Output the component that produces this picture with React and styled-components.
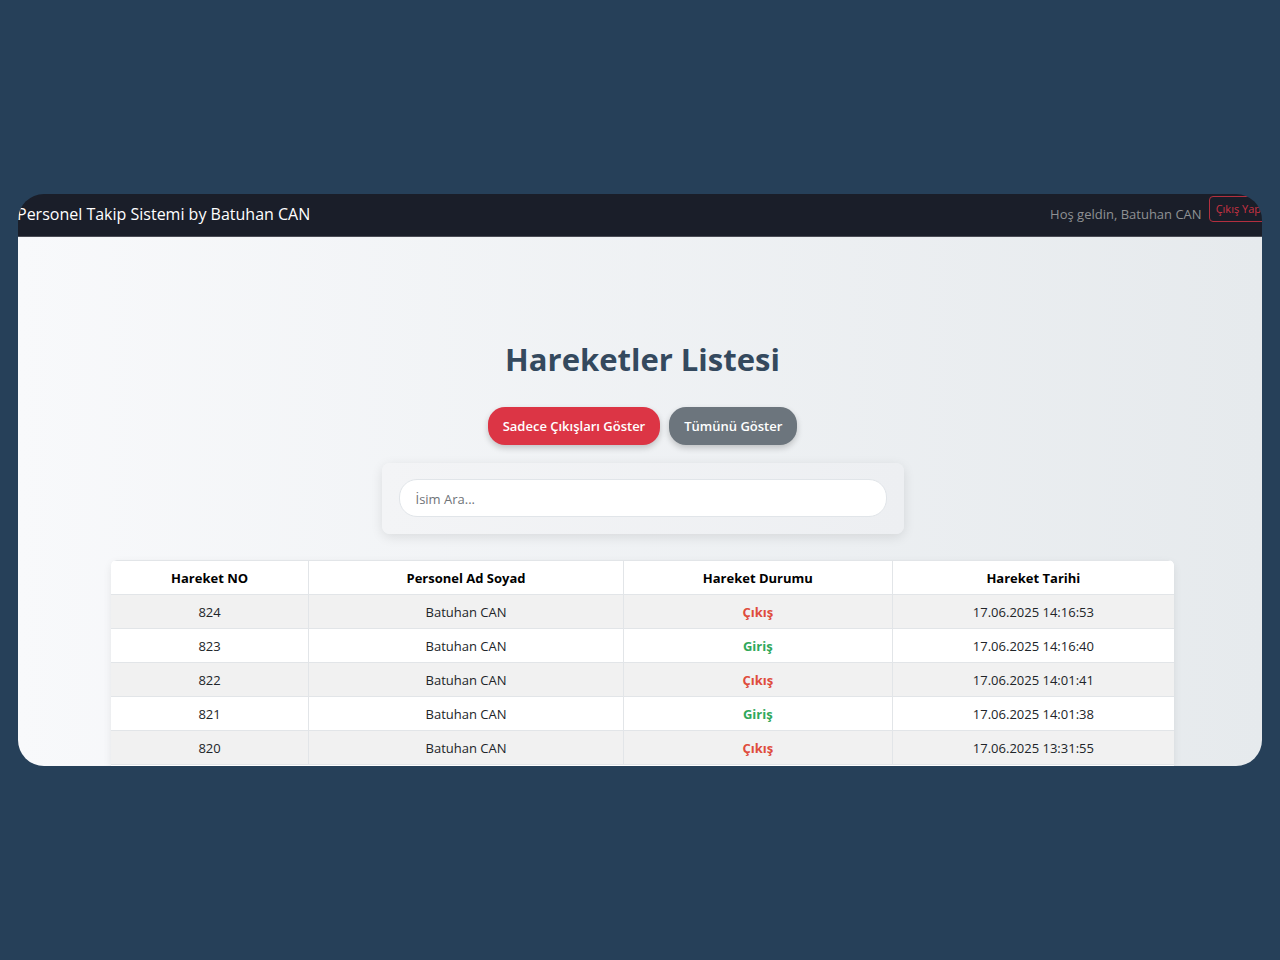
import React, { useState } from "react";
import styled, { createGlobalStyle } from "styled-components";

const GlobalStyle = createGlobalStyle`
  *, *::before, *::after { box-sizing: border-box; }
  body {
    margin: 0;
    background: #264059;
    color: #212529;
    font-family: "Segoe UI", "Open Sans", "Noto Sans", sans-serif;
    font-size: 13px;
    line-height: 20px;
  }
`;

const Page = styled.div`
  min-height: 100vh;
  padding: 18px;
  display: flex;
  align-items: center;
`;

const Frame = styled.div`
  flex: 1;
  min-width: 0;
  overflow: hidden;
  border-radius: 26px;
`;

const Navbar = styled.header`
  display: flex;
  align-items: flex-start;
  height: 43px;
  margin: 0 -6px 0 -1px;
  background: #1a1e29;
  border-bottom: 1px solid #4a4c55;
`;

const Brand = styled.a`
  flex: 1;
  color: #fff;
  font-size: 16px;
  line-height: 41px;
  text-decoration: none;
  white-space: nowrap;
`;

const Welcome = styled.span`
  margin-right: 7px;
  color: #8f9194;
  line-height: 41px;
  white-space: nowrap;
`;

const LogoutButton = styled.button`
  height: 26px;
  margin-top: 2px;
  padding: 0 6px;
  border: 1px solid #b32f3f;
  border-radius: 4px;
  background: transparent;
  color: #c93243;
  font: inherit;
  font-size: 11px;
  white-space: nowrap;
`;

const Main = styled.main`
  display: flex;
  flex-direction: column;
  align-items: center;
  padding: 98px 88px 0 93px;
  background: linear-gradient(90deg, #f8f9fb 0%, #e6eaed 100%);
`;

const Title = styled.h1`
  margin: 0 0 24px;
  color: #34495e;
  font-size: 31px;
  font-weight: 700;
  line-height: 48px;
`;

const Filters = styled.div`
  display: flex;
  gap: 9px;
  margin-bottom: 18px;
`;

const FilterButton = styled.button`
  height: 38px;
  padding: 0 15px;
  border: 0;
  border-radius: 17px;
  background: ${({ $tone }) => ($tone === "danger" ? "#dc3545" : "#6c757d")};
  box-shadow: 0 3px 6px rgba(0, 0, 0, 0.2);
  color: #fff;
  font: inherit;
  font-weight: 600;
  cursor: pointer;
`;

const SearchCard = styled.div`
  width: 100%;
  max-width: 522px;
  margin-bottom: 26px;
  padding: 16px 17px 17px;
  border-radius: 8px;
  background: linear-gradient(90deg, #f3f4f6, #edeff2);
  box-shadow: 0 3px 12px rgba(0, 0, 0, 0.1);
`;

const SearchInput = styled.input`
  display: block;
  width: 100%;
  height: 38px;
  padding: 1px 16px 0;
  border: 1px solid #e1e5e9;
  border-radius: 18px;
  background: #fff;
  color: #212529;
  font: inherit;
  &::placeholder { color: #6f7378; opacity: 1; }
`;

const TableCard = styled.div`
  width: 100%;
  padding-bottom: 1px;
  overflow: hidden;
  border-radius: 6px 6px 0 0;
  background: #fff;
  box-shadow: 0 3px 9px rgba(0, 0, 0, 0.08);
`;

const Table = styled.table`
  width: 100%;
  table-layout: fixed;
  border-collapse: collapse;
  background: #fff;
  text-align: center;
`;

const HeadCell = styled.th`
  width: ${({ $width }) => $width};
  height: 34px;
  padding: 0;
  border: 1px solid #e2e5e8;
  border-left-width: ${({ $first }) => ($first ? 0 : "1px")};
  border-right-width: 0;
  color: #000;
  font-weight: 700;
`;

const Row = styled.tr`
  background: #fff;
  &:nth-child(odd) { background: #f1f1f1; }
`;

const Cell = styled.td`
  height: 34px;
  padding: 0;
  border: 1px solid #e2e5e8;
  border-right-width: 0;
  &:first-child { border-left-width: 0; }
`;

const Status = styled.strong`
  color: ${({ $out }) => ($out ? "#df4b3c" : "#2fa85a")};
  font-weight: 700;
`;

const columns = [
  { label: "Hareket NO", width: "18.6%" },
  { label: "Personel Ad Soyad", width: "29.6%" },
  { label: "Hareket Durumu", width: "25.3%" },
  { label: "Hareket Tarihi", width: "26.5%" },
];

const movements = [
  { id: 824, name: "Batuhan CAN", status: "Çıkış", date: "17.06.2025 14:16:53" },
  { id: 823, name: "Batuhan CAN", status: "Giriş", date: "17.06.2025 14:16:40" },
  { id: 822, name: "Batuhan CAN", status: "Çıkış", date: "17.06.2025 14:01:41" },
  { id: 821, name: "Batuhan CAN", status: "Giriş", date: "17.06.2025 14:01:38" },
  { id: 820, name: "Batuhan CAN", status: "Çıkış", date: "17.06.2025 13:31:55" },
];

export default function App() {
  const [onlyExits, setOnlyExits] = useState(false);
  const [query, setQuery] = useState("");
  const rows = movements.filter(
    (m) =>
      (!onlyExits || m.status === "Çıkış") &&
      m.name.toLocaleLowerCase("tr").includes(query.toLocaleLowerCase("tr"))
  );

  return (
    <>
      <GlobalStyle />
      <Page>
        <Frame>
          <Navbar>
            <Brand href="#">Personel Takip Sistemi by Batuhan CAN</Brand>
            <Welcome>Hoş geldin, Batuhan CAN</Welcome>
            <LogoutButton type="button">Çıkış Yap</LogoutButton>
          </Navbar>
          <Main>
            <Title>Hareketler Listesi</Title>
            <Filters>
              <FilterButton type="button" $tone="danger" onClick={() => setOnlyExits(true)}>
                Sadece Çıkışları Göster
              </FilterButton>
              <FilterButton type="button" onClick={() => setOnlyExits(false)}>
                Tümünü Göster
              </FilterButton>
            </Filters>
            <SearchCard>
              <SearchInput
                type="text"
                aria-label="İsim Ara"
                placeholder="İsim Ara..."
                value={query}
                onChange={(e) => setQuery(e.target.value)}
              />
            </SearchCard>
            <TableCard>
              <Table>
                <thead>
                  <tr>
                    {columns.map((c, i) => (
                      <HeadCell key={c.label} scope="col" $width={c.width} $first={i === 0}>
                        {c.label}
                      </HeadCell>
                    ))}
                  </tr>
                </thead>
                <tbody>
                  {rows.map((m) => (
                    <Row key={m.id}>
                      <Cell>{m.id}</Cell>
                      <Cell>{m.name}</Cell>
                      <Cell>
                        <Status $out={m.status === "Çıkış"}>{m.status}</Status>
                      </Cell>
                      <Cell>{m.date}</Cell>
                    </Row>
                  ))}
                </tbody>
              </Table>
            </TableCard>
          </Main>
        </Frame>
      </Page>
    </>
  );
}
